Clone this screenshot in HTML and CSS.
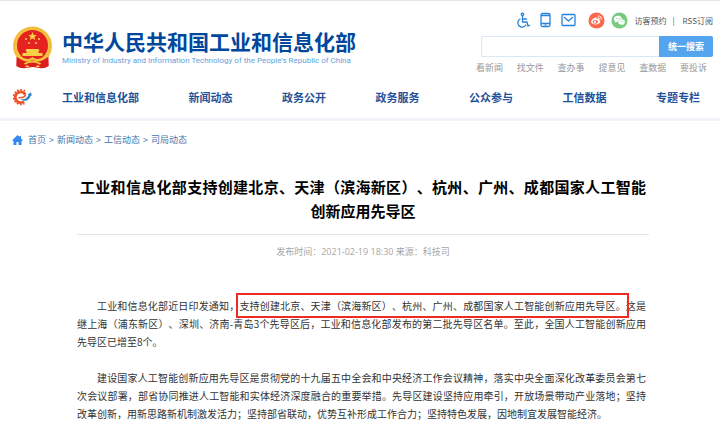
FILE: index.html
```html
<!DOCTYPE html>
<html lang="zh-CN">
<head>
<meta charset="utf-8">
<meta name="viewport" content="width=device-width, initial-scale=1">
<title>中华人民共和国工业和信息化部</title>
<link rel="stylesheet" href="styles.css">
</head>
<body>
<header class="header">
  <div class="masthead">
    <a class="brand" href="#">
      <svg class="emblem" viewBox="0 0 40 43" aria-hidden="true">
        <path d="M5 27 4 40q4 3 9 2l7-1 7 1q5 1 9-2l-1-13z" fill="#da1f1c"/>
        <circle cx="20" cy="20" r="19.500" fill="#f5c243"/>
        <circle cx="20" cy="20" r="18" fill="none" stroke="#e9ae38" stroke-dasharray="2 2"/>
        <circle cx="20" cy="19.500" r="15.500" fill="#e42320"/>
        <path d="m20 6 1.200 2.900 3.100.2-2.400 2 .8 3-2.700-1.700-2.700 1.700.8-3-2.400-2 3.100-.2z" fill="#f8cf45"/>
        <g fill="#f8cf45"><circle cx="13.500" cy="13" r="1"/><circle cx="26.500" cy="13" r="1"/><circle cx="16.500" cy="17" r="1"/><circle cx="23.500" cy="17" r="1"/>
        <path d="M14 23h12l1 2h-1v2h4v3H10v-3h4v-2h-1z"/></g>
        <path d="M4 31q8 3 16 0 8 3 16 0v9q-4 2-8 1l-8-1-8 1q-4 1-8-1z" fill="#da1f1c"/>
        <path d="M5 28q9 8 15 3 6 5 15-3v3q-8 7-15 3-7 4-15-3z" fill="#f5c243"/>
        <path d="M12 38q8-5 16 0" fill="none" stroke="#f5c243" stroke-width="2"/>
        <path d="m12 41 3-2 2 2zm11 0 2-2 3 2z" fill="#f8cf45"/>
      </svg>
      <span class="brand-text">
        <strong class="brand-name">中华人民共和国工业和信息化部</strong>
        <span class="brand-en">Ministry of Industry and Information Technology of the People's Republic of China</span>
      </span>
    </a>
    <div class="tools">
      <div class="utility">
        <a class="tool" href="#" aria-label="无障碍"><svg class="icon" viewBox="0 0 16 16" fill="none" stroke="#2781dc" stroke-width="1.300" stroke-linecap="round" stroke-linejoin="round"><circle cx="8" cy="2.300" r="1.200"/><path d="M8 4v6h4.500l1 4 1.500-.6M8.200 7H12M5.600 7a4.300 4.300 0 1 0 5.700 6"/></svg></a>
        <a class="tool" href="#" aria-label="移动版"><svg class="icon" viewBox="0 0 16 16" fill="none" stroke="#2781dc" stroke-width="1.300"><rect x="3.500" y="1.500" width="9" height="13" rx="1.500"/><path d="M3.500 3.500h9M3.500 11.500h9M7.200 13.200h1.600"/></svg></a>
        <a class="tool" href="#" aria-label="邮箱"><svg class="icon" viewBox="0 0 16 16" fill="none" stroke="#2781dc" stroke-width="1.300" stroke-linejoin="round"><rect x="1.500" y="2.500" width="13" height="11" rx="1"/><path d="m3.500 5 4.500 4 4.500-4"/></svg></a>
        <a class="tool social" href="#" aria-label="微博"><svg class="badge" viewBox="0 0 18 18"><circle cx="9" cy="9" r="8.500" fill="#fb674d"/><path d="M7.300 6.100c1.400-.7 2.200 0 1.800 1.100 1.800-.7 3-.2 2.500 1.200 3 1.200.8 4.700-3.500 4.800-4.500 0-5.900-2.600-3.800-5 .9-1 2-1.700 3-2.100z" fill="#fff"/><ellipse cx="7.800" cy="10.400" rx="2.900" ry="2" fill="#fb674d"/><circle cx="7.500" cy="10.500" r="1.200" fill="#fff"/><path d="M10.700 4.200c2.500-.4 4 1.500 3.300 3.700M10.900 6c1-.1 1.600.6 1.300 1.500" fill="none" stroke="#fff" stroke-linecap="round"/></svg></a>
        <a class="tool" href="#" aria-label="微信"><svg class="badge" viewBox="0 0 18 18"><circle cx="9" cy="9" r="8.500" fill="#78ca80"/><path d="M7.300 4C4.700 4 3 5.500 3 7.400c0 1.100.6 2 1.500 2.600L4 11.500l1.800-.9 1.500.2c2.600 0 4.300-1.500 4.300-3.400S9.900 4 7.300 4z" fill="#fff"/><path d="M11.200 7.500c-2.300 0-4 1.300-4 3.100s1.700 3.100 4 3.100l1.200-.2 1.600.8-.4-1.400c.9-.6 1.400-1.400 1.400-2.300 0-1.800-1.600-3.100-3.800-3.100z" fill="#fff" stroke="#78ca80" stroke-width=".5"/><g fill="#78ca80"><circle cx="5.900" cy="6.600" r=".6"/><circle cx="8.600" cy="6.600" r=".6"/><circle cx="9.900" cy="10" r=".5"/><circle cx="12.400" cy="10" r=".5"/></g></svg></a>
        <a class="text-link" href="#">访客预约</a>
        <span class="divider">|</span>
        <a class="text-link" href="#">RSS订阅</a>
      </div>
      <form class="search">
        <input class="search-input" type="text" aria-label="搜索">
        <button class="search-button" type="button">统一搜索</button>
      </form>
      <div class="shortcuts">
        <a href="#">看新闻</a><a href="#">找文件</a><a href="#">查办事</a><a href="#">提意见</a><a href="#">查数据</a><a href="#">要投诉</a>
      </div>
    </div>
  </div>
  <nav class="nav">
    <svg class="nav-logo" viewBox="0 0 20 18" aria-hidden="true">
      <path d="M13 3A7.300 7.300 0 1 0 12.500 15.500" fill="none" stroke="#ee5427" stroke-width="1.800" stroke-dasharray="1.700 1.500"/>
      <path d="M13.300 6.500A5.400 5.400 0 1 0 12 13.500" fill="none" stroke="#ee5427" stroke-width="2.800"/>
      <path d="M6.500 9.800c3 0 7-.8 7-3.300" fill="none" stroke="#ee5427" stroke-width="1.600"/>
      <path d="M8.500 11c3.500 1 7.500-.8 8-4.500L15 7l4-2.700.8 3.700-1.200-.5c-.8 5-6.600 7-10.100 3.500z" fill="#2b83c8"/>
    </svg>
    <div class="nav-links">
      <a href="#">工业和信息化部</a><a href="#">新闻动态</a><a href="#">政务公开</a><a href="#">政务服务</a><a href="#">公众参与</a><a href="#">工信数据</a><a href="#">专题专栏</a>
    </div>
  </nav>
</header>
<main>
  <div class="crumbs">
    <svg class="home" viewBox="0 0 10 10" aria-hidden="true"><path d="M5 0 0 5v1h1v4h3V7h2v3h3V6h1V5L8.500 3.500V1H7v1z" fill="#3389ee"/></svg>
    <a href="#">首页</a><span>&gt;</span><a href="#">新闻动态</a><span>&gt;</span><a href="#">工信动态</a><span>&gt;</span><a href="#">司局动态</a>
  </div>
  <article class="article">
    <h1 class="title">工业和信息化部支持创建北京、天津（滨海新区）、杭州、广州、成都国家人工智能创新应用先导区</h1>
    <p class="meta">发布时间：2021-02-19 18:30 来源：科技司</p>
    <div class="content">
      <p>工业和信息化部近日印发通知，<span class="marked">支持创建北京、天津（滨海新区）、杭州、广州、成都国家人工智能创新应用先导区。</span>这是继上海（浦东新区）、深圳、济南-青岛3个先导区后，工业和信息化部发布的第二批先导区名单。至此，全国人工智能创新应用先导区已增至8个。</p>
      <p>建设国家人工智能创新应用先导区是贯彻党的十九届五中全会和中央经济工作会议精神，落实中央全面深化改革委员会第七次会议部署，部省协同推进人工智能和实体经济深度融合的重要举措。先导区建设坚持应用牵引，开放场景带动产业落地；坚持改革创新，用新思路新机制激发活力；坚持部省联动，优势互补形成工作合力；坚持特色发展，因地制宜发展智能经济。</p>
    </div>
  </article>
</main>
</body>
</html>
```

FILE: styles.css
```css
* {
  box-sizing: border-box;
}

body {
  margin: 0;
  background: #fff;
  color: #333;
  font-family: "Noto Sans CJK SC", sans-serif;
  font-size: 9px;
  text-spacing-trim: space-all;
}

a {
  color: inherit;
  text-decoration: none;
}

svg {
  display: block;
  flex: none;
}

.header {
  border-top: 1px solid #e3e5ed;
  border-bottom: 3px solid #f1f5fa;
}

.masthead {
  display: flex;
  justify-content: space-between;
  padding: 10px 7px 0 12px;
}

.brand {
  display: flex;
  align-items: flex-start;
  gap: 9px;
  padding-top: 15px;
}

.emblem {
  width: 41px;
  height: 43px;
}

.brand-text {
  display: flex;
  flex-direction: column;
  white-space: nowrap;
}

.brand-name {
  color: #00479d;
  font-size: 21px;
  line-height: 30px;
}

.brand-en {
  color: #64a2dc;
  font-family: Roboto, sans-serif;
  font-size: 8px;
  line-height: 10px;
}

.tools {
  width: 232px;
}

.utility {
  display: flex;
  align-items: center;
  justify-content: flex-end;
  height: 18px;
  color: #555;
  font-size: 8px;
  white-space: nowrap;
}

.tool {
  margin-right: 6px;
}

.social {
  margin-left: 5px;
}

.icon {
  width: 17px;
  height: 16px;
}

.badge {
  width: 17px;
  height: 17px;
}

.divider {
  margin: 0 8px 0 6px;
}

.search {
  display: flex;
  height: 21px;
  margin: 7px 0 0;
}

.search-input {
  flex: 1;
  min-width: 0;
  border: 1px solid #dce7f4;
  border-right: 0;
  border-radius: 2px 0 0 2px;
  background: #fff;
}

.search-button {
  width: 54px;
  padding: 0;
  border: 0;
  border-radius: 0 2px 2px 0;
  background: #54a4ee;
  color: #fff;
  font: bold 9px "Noto Sans CJK SC", sans-serif;
}

.shortcuts {
  display: flex;
  justify-content: space-between;
  margin: 4px 6px 0 -5px;
  color: #999;
  line-height: 14px;
}

.nav {
  display: flex;
  align-items: center;
  gap: 30px;
  height: 43px;
  padding: 0 20px 0 12px;
}

.nav-logo {
  width: 20px;
  height: 18px;
}

.nav-links {
  display: flex;
  flex: 1;
  justify-content: space-between;
  color: #1f529a;
  font-size: 11px;
  font-weight: bold;
}

.crumbs {
  display: flex;
  align-items: center;
  gap: 3px;
  padding: 12px 12px 0;
  color: #4277ae;
  line-height: 14px;
}

.home {
  width: 11px;
  height: 10px;
  margin-right: 2px;
}

.article {
  padding: 0 71px 0 77px;
}

.title {
  margin: 0;
  padding: 28px 3px 11px;
  border-bottom: 1px solid #e3e3e3;
  color: #000;
  font-size: 15px;
  line-height: 24px;
  text-align: justify;
  text-align-last: center;
}

.meta {
  margin: 10px 0 0;
  color: #a5a5a5;
  font-family: "Open Sans", "Noto Sans CJK SC", sans-serif;
  line-height: 14px;
  text-align: center;
}

.content {
  padding: 38px 3px 0 0;
  font-size: 10px;
  line-height: 18px;
}

.content p {
  margin: 0 0 18px;
  text-align: justify;
  text-indent: 2em;
}

.marked {
  padding: 2px 0;
  outline: 2px solid #ee2b20;
  outline-offset: 1px;
}
```
